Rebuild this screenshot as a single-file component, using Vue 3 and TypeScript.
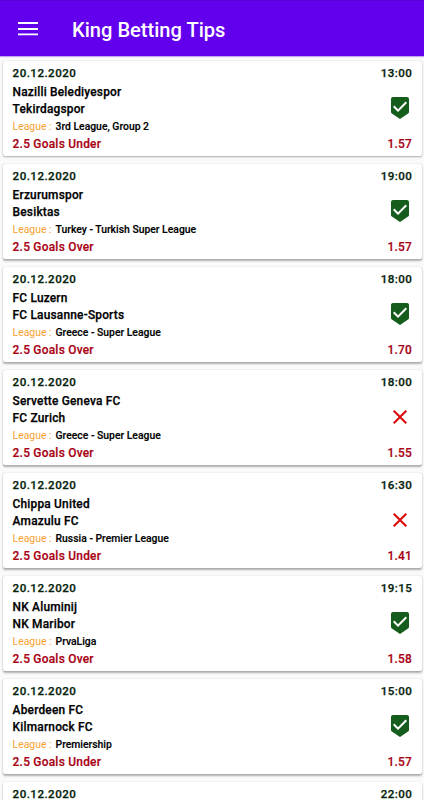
<script setup lang="ts">
interface Tip {
  date: string
  time: string
  home: string
  away: string
  league: string
  pick: string
  odds: string
  won: boolean
}

const date = '20.12.2020'
const tips: Tip[] = [
  { date, time: '13:00', home: 'Nazilli Belediyespor', away: 'Tekirdagspor', league: '3rd League, Group 2', pick: '2.5 Goals Under', odds: '1.57', won: true },
  { date, time: '19:00', home: 'Erzurumspor', away: 'Besiktas', league: 'Turkey - Turkish Super League', pick: '2.5 Goals Over', odds: '1.57', won: true },
  { date, time: '18:00', home: 'FC Luzern', away: 'FC Lausanne-Sports', league: 'Greece - Super League', pick: '2.5 Goals Over', odds: '1.70', won: true },
  { date, time: '18:00', home: 'Servette Geneva FC', away: 'FC Zurich', league: 'Greece - Super League', pick: '2.5 Goals Over', odds: '1.55', won: false },
  { date, time: '16:30', home: 'Chippa United', away: 'Amazulu FC', league: 'Russia - Premier League', pick: '2.5 Goals Under', odds: '1.41', won: false },
  { date, time: '19:15', home: 'NK Aluminij', away: 'NK Maribor', league: 'PrvaLiga', pick: '2.5 Goals Over', odds: '1.58', won: true },
  { date, time: '15:00', home: 'Aberdeen FC', away: 'Kilmarnock FC', league: 'Premiership', pick: '2.5 Goals Under', odds: '1.57', won: true },
  { date, time: '22:00', home: '', away: '', league: '', pick: '', odds: '', won: true },
]
</script>

<template>
  <div class="screen">
    <header class="bar">
      <svg class="menu" viewBox="0 0 20 14" aria-hidden="true">
        <path d="M0 1h20M0 7h20M0 12.4h20" stroke="#fff" stroke-width="1.9" />
      </svg>
      <h1 class="title">King Betting Tips</h1>
    </header>
    <main class="list">
      <article v-for="(tip, i) in tips" :key="i" class="card" :style="{ '--depth': i / 7 }">
        <div class="row head">
          <span>{{ tip.date }}</span>
          <span>{{ tip.time }}</span>
        </div>
        <div class="middle">
          <div class="match">
            <div class="team">{{ tip.home }}</div>
            <div class="team">{{ tip.away }}</div>
            <div v-if="tip.league" class="league">
              <span class="label">League :</span>
              <span class="name">{{ tip.league }}</span>
            </div>
          </div>
          <svg v-if="tip.won" class="status" viewBox="0 0 24 24">
            <path fill="#155d1c" d="M19 1H5c-1.1 0-1.99.9-1.99 2L3 15.93c0 .69.35 1.3.88 1.66L12 23l8.11-5.41c.53-.36.88-.97.88-1.66L21 3c0-1.1-.9-2-2-2zm-9 15l-5-5 1.41-1.41L10 13.17l7.59-7.59L19 7l-9 9z" />
          </svg>
          <svg v-else class="status" viewBox="0 0 24 24">
            <path fill="#dc0808" d="M19 6.41L17.59 5 12 10.59 6.41 5 5 6.41 10.59 12 5 17.59 6.41 19 12 13.41 17.59 19 19 17.59 13.41 12z" />
          </svg>
        </div>
        <div class="row bet">
          <span>{{ tip.pick }}</span>
          <span>{{ tip.odds }}</span>
        </div>
      </article>
    </main>
  </div>
</template>

<style>
body {
  margin: 0;
  overflow: hidden;
}
</style>

<style scoped>
.screen {
  height: 800px;
  overflow: hidden;
  background: #fafafa;
  font-family: Roboto, "Liberation Sans", sans-serif;
  font-weight: 500;
  color: #000;
}
.bar {
  box-sizing: border-box;
  height: 56px;
  display: flex;
  align-items: center;
  padding: 0 18px;
  background: #6200ee;
  border-top: 1px solid #5600d4;
  box-shadow: 0 1px 1px rgba(98, 0, 238, 0.35);
}
.menu {
  width: 20px;
  height: 14px;
  margin-right: 34px;
}
.title {
  margin: 0;
  padding-top: 2px;
  font-size: 20.1px;
  font-weight: 500;
  line-height: 24px;
  color: #fff;
}
.list {
  display: flex;
  flex-direction: column;
  gap: 8px;
  padding: 5px 2px 0 3px;
}
.card {
  box-sizing: border-box;
  flex: none;
  height: 95px;
  padding: 4px 10px 0 9.6px;
  border-radius: 2px;
  background: #fff;
  box-shadow:
    0 0 1px rgba(0, 0, 0, 0.22),
    0 calc(1px + var(--depth) * 1px) 2px rgba(0, 0, 0, 0.3);
}
.row {
  display: flex;
  justify-content: space-between;
  line-height: 17px;
  white-space: nowrap;
}
.head {
  font-size: 11.6px;
  letter-spacing: 0.45px;
  color: #04220a;
  -webkit-text-stroke: 0.25px #04220a;
}
.head span:last-child {
  margin-right: -0.4px;
}
.middle {
  display: flex;
  justify-content: space-between;
  height: 53px;
}
.team {
  height: 17.4px;
  font-size: 11.9px;
  line-height: 20px;
  letter-spacing: 0.2px;
  -webkit-text-stroke: 0.25px #000;
}
.league {
  display: flex;
  gap: 4px;
  font-size: 10.4px;
  line-height: 20px;
}
.name {
  -webkit-text-stroke: 0.15px #000;
}
.label {
  font-weight: 400;
  color: #f7a030;
}
.status {
  width: 24px;
  height: 24px;
  margin-top: 14.4px;
}
.bet {
  font-size: 11.9px;
  letter-spacing: 0.25px;
  line-height: 19px;
  color: #a80012;
  -webkit-text-stroke: 0.2px #a80012;
}
</style>
